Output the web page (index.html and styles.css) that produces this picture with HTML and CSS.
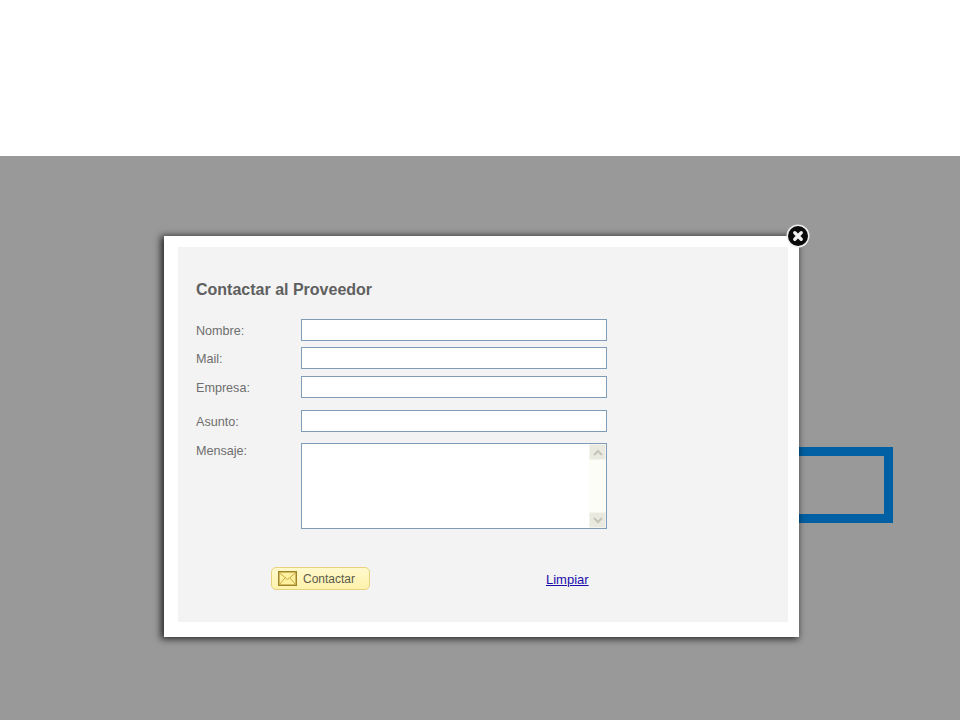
FILE: index.html
```html
<!DOCTYPE html>
<html lang="en">
<head>
    <meta charset="UTF-8">
    <meta name="viewport" content="width=device-width, initial-scale=1.0">
    <title>Contactar al Proveedor</title>
    <link rel="stylesheet" href="styles.css">
</head>
<body>

<div class="top"></div>

<div class="overlay">
    <div class="blue-box"></div>

    <div class="modal">
        <svg class="close" width="24" height="24" viewBox="0 0 24 24">
            <circle cx="12" cy="12" r="11.5" fill="#eee"/>
            <circle cx="12" cy="12" r="10" fill="#0a0a0a"/>
            <path d="M8.8 8.8L15.2 15.2M15.2 8.8L8.8 15.2" stroke="#f2f2f2" stroke-width="3.4" stroke-linecap="round"/>
        </svg>

        <div class="panel">
            <h2>Contactar al Proveedor</h2>

            <div class="row row-nombre">
                <label for="nombre">Nombre:</label>
                <input type="text" id="nombre">
            </div>
            <div class="row row-mail">
                <label for="mail">Mail:</label>
                <input type="text" id="mail">
            </div>
            <div class="row row-empresa">
                <label for="empresa">Empresa:</label>
                <input type="text" id="empresa">
            </div>
            <div class="row row-asunto">
                <label for="asunto">Asunto:</label>
                <input type="text" id="asunto">
            </div>
            <div class="row row-mensaje">
                <label>Mensaje:</label>
                <div class="textarea">
                    <div class="scrollbar">
                        <div class="scroll-btn">
                            <svg width="10" height="7" viewBox="0 0 10 7"><path d="M1 6L5 2L9 6" fill="none" stroke="#c4c4b8" stroke-width="2"/></svg>
                        </div>
                        <div class="scroll-btn">
                            <svg width="10" height="7" viewBox="0 0 10 7"><path d="M1 1L5 5L9 1" fill="none" stroke="#c4c4b8" stroke-width="2"/></svg>
                        </div>
                    </div>
                </div>
            </div>

            <div class="actions">
                <button class="send">
                    <svg width="19" height="15" viewBox="0 0 19 15">
                        <rect x="0.75" y="0.75" width="17.5" height="13.5" fill="#fff0a0" stroke="#a08428" stroke-width="1.5"/>
                        <path d="M1 1.5L9.5 8.5L18 1.5M1 14L7 7M18 14L12 7" fill="none" stroke="#c9a93c"/>
                    </svg>
                    Contactar
                </button>
                <a class="clear" href="#">Limpiar</a>
            </div>
        </div>
    </div>
</div>

</body>
</html>
```

FILE: styles.css
```css
body {
    margin: 0;
    font-family: 'Liberation Sans', Arial, sans-serif;
    background-color: #fff;
}

.top {
    height: 156px;
}

.overlay {
    position: relative;
    height: 564px;
    background-color: #999;
    overflow: hidden;
}

.blue-box {
    position: absolute;
    left: 700px;
    top: 291px;
    width: 175px;
    height: 58px;
    border: 9px solid #0060a3;
}

.modal {
    position: absolute;
    left: 164px;
    top: 80px;
    width: 635px;
    height: 401px;
    box-sizing: border-box;
    padding: 11px 11px 15px 14px;
    background-color: #fff;
    box-shadow: -2px 1px 7px 1px rgba(0, 0, 0, 0.75);
}

.close {
    position: absolute;
    right: -11px;
    top: -12px;
}

.panel {
    height: 100%;
    box-sizing: border-box;
    padding: 33px 18px 0;
    background-color: #f3f3f3;
}

h2 {
    margin: 0 0 20px;
    font-size: 16px;
    line-height: 19px;
    font-weight: bold;
    color: #5f5f5f;
}

.row {
    display: flex;
    align-items: center;
}

.row label {
    width: 105px;
    padding-top: 1px;
    font-size: 12.6px;
    color: #6e6e6e;
}

.row input {
    width: 306px;
    height: 22px;
    box-sizing: border-box;
    margin: 0;
    padding: 0 3px;
    background-color: #fff;
    border: 1px solid #7f9db9;
}

.row-mail {
    margin-top: 6px;
}

.row-empresa {
    margin-top: 7px;
}

.row-asunto {
    margin-top: 12px;
}

.row-mensaje {
    margin-top: 11px;
    align-items: flex-start;
}

.textarea {
    width: 306px;
    height: 86px;
    box-sizing: border-box;
    display: flex;
    justify-content: flex-end;
    background-color: #fff;
    border: 1px solid #7f9db9;
}

.scrollbar {
    width: 17px;
    display: flex;
    flex-direction: column;
    justify-content: space-between;
    background-color: #fdfdf8;
}

.scroll-btn {
    height: 16px;
    display: flex;
    align-items: center;
    justify-content: center;
    background-color: #e9e9e0;
    border: 1px solid #f4f4ee;
    box-sizing: border-box;
}

.actions {
    display: flex;
    align-items: center;
    margin-top: 38px;
    padding-left: 75px;
}

.send {
    display: flex;
    align-items: center;
    gap: 6px;
    width: 99px;
    height: 23px;
    box-sizing: border-box;
    padding: 0 0 0 6px;
    font-family: inherit;
    font-size: 12px;
    color: #5a5a4a;
    background: linear-gradient(#fff8cc, #fff2ac);
    border: 1px solid #e8d27c;
    border-radius: 5px;
}

.clear {
    margin-left: 176px;
    padding-top: 1px;
    font-size: 13px;
    color: #1a0dab;
}
```
